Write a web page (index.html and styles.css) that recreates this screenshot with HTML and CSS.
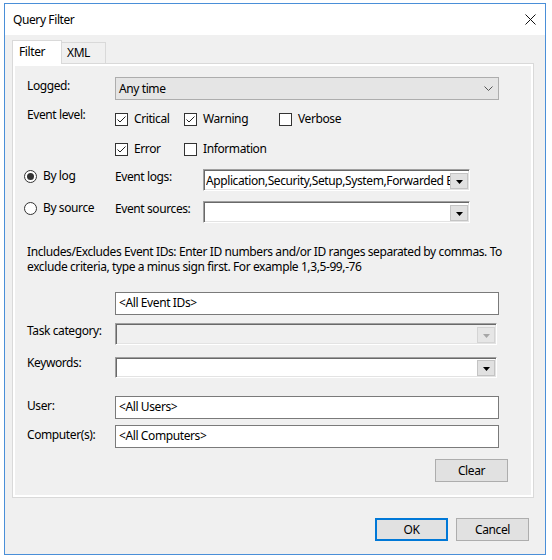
FILE: index.html
```html
<!DOCTYPE html>
<html lang="en">
<head>
    <meta charset="UTF-8">
    <meta name="viewport" content="width=device-width, initial-scale=1.0">
    <title>Query Filter</title>
    <link rel="stylesheet" href="styles.css">
</head>
<body>

<div class="dialog">
    <div class="titlebar">
        <span class="title">Query Filter</span>
        <svg class="close" width="11" height="11" viewBox="0 0 11 11">
            <path d="M0.5 0.5 L10.5 10.5 M10.5 0.5 L0.5 10.5" stroke="#111" stroke-width="1" fill="none"/>
        </svg>
    </div>

    <div class="dialog-body">
        <div class="tabs">
            <div class="tab active">Filter</div>
            <div class="tab">XML</div>
        </div>

        <div class="panel">
            <div class="row row-logged">
                <span class="lbl">Logged:</span>
                <div class="select">
                    <span class="select-text">Any time</span>
                    <svg class="chevron" width="9" height="6" viewBox="0 0 9 6">
                        <polyline points="0.5,0.5 4.5,4.5 8.5,0.5" stroke="#555" stroke-width="1" fill="none"/>
                    </svg>
                </div>
            </div>

            <div class="row row-level1">
                <span class="lbl lbl-level">Event level:</span>
                <div class="checks">
                    <span class="check"><span class="box"><svg width="11" height="11" viewBox="0 0 11 11"><polyline points="1.5,5.5 4,8 9.5,2.5" stroke="#222" stroke-width="1" fill="none"/></svg></span>Critical</span>
                    <span class="check"><span class="box"><svg width="11" height="11" viewBox="0 0 11 11"><polyline points="1.5,5.5 4,8 9.5,2.5" stroke="#222" stroke-width="1" fill="none"/></svg></span>Warning</span>
                    <span class="check"><span class="box"></span>Verbose</span>
                </div>
            </div>

            <div class="row row-level2">
                <span class="lbl"></span>
                <div class="checks">
                    <span class="check"><span class="box"><svg width="11" height="11" viewBox="0 0 11 11"><polyline points="1.5,5.5 4,8 9.5,2.5" stroke="#222" stroke-width="1" fill="none"/></svg></span>Error</span>
                    <span class="check"><span class="box"></span>Information</span>
                </div>
            </div>

            <div class="row row-bylog">
                <span class="radio on"><span class="dot"></span>By log</span>
                <span class="lbl">Event logs:</span>
                <div class="combo combo-short">
                    <span class="combo-text">Application,Security,Setup,System,Forwarded Events</span>
                    <span class="drop">
                        <svg width="7" height="4" viewBox="0 0 7 4"><polygon points="0,0 7,0 3.5,4" fill="#000"/></svg>
                    </span>
                </div>
            </div>

            <div class="row row-bysource">
                <span class="radio"><span class="dot"></span>By source</span>
                <span class="lbl">Event sources:</span>
                <div class="combo combo-short">
                    <span class="combo-text"></span>
                    <span class="drop">
                        <svg width="7" height="4" viewBox="0 0 7 4"><polygon points="0,0 7,0 3.5,4" fill="#000"/></svg>
                    </span>
                </div>
            </div>

            <p class="hint">Includes/Excludes Event IDs: Enter ID numbers and/or ID ranges separated by commas. To<br>exclude criteria, type a minus sign first. For example 1,3,5-99,-76</p>

            <div class="row row-ids">
                <span class="lbl"></span>
                <div class="text-input">&lt;All Event IDs&gt;</div>
            </div>

            <div class="row row-task">
                <span class="lbl">Task category:</span>
                <div class="combo combo-long disabled">
                    <span class="combo-text"></span>
                    <span class="drop">
                        <svg width="7" height="4" viewBox="0 0 7 4"><polygon points="0,0 7,0 3.5,4" fill="#a6a6a6"/></svg>
                    </span>
                </div>
            </div>

            <div class="row row-keywords">
                <span class="lbl lbl-keywords">Keywords:</span>
                <div class="combo combo-long">
                    <span class="combo-text"></span>
                    <span class="drop">
                        <svg width="7" height="4" viewBox="0 0 7 4"><polygon points="0,0 7,0 3.5,4" fill="#000"/></svg>
                    </span>
                </div>
            </div>

            <div class="row row-user">
                <span class="lbl lbl-low">User:</span>
                <div class="text-input">&lt;All Users&gt;</div>
            </div>

            <div class="row row-computer">
                <span class="lbl lbl-low">Computer(s):</span>
                <div class="text-input">&lt;All Computers&gt;</div>
            </div>

            <div class="row row-clear">
                <button class="btn btn-clear">Clear</button>
            </div>
        </div>

        <div class="footer">
            <button class="btn btn-default">OK</button>
            <button class="btn">Cancel</button>
        </div>
    </div>
</div>

</body>
</html>
```

FILE: styles.css
```css
* {
    box-sizing: border-box;
}

body {
    margin: 0;
    width: 552px;
    height: 560px;
    overflow: hidden;
    background: #fff;
    font-family: "Noto Sans", "Liberation Sans", sans-serif;
    font-size: 12px;
    letter-spacing: -0.4px;
    color: #000;
}

/* window frame */
.dialog {
    margin: 3px 0 0 4px;
    width: 542px;
    height: 552px;
    border: 1px solid #4a8fd8;
    background: #f0f0f0;
    display: flex;
    flex-direction: column;
}

.titlebar {
    height: 31px;
    flex: none;
    background: #fff;
    display: flex;
    align-items: center;
    justify-content: space-between;
    padding: 0 9px 0 8px;
}

.title {
    line-height: 16px;
}

.dialog-body {
    flex: 1;
    padding: 5px 11px 0 7px;
}

/* tabs */
.tabs {
    display: flex;
    align-items: flex-end;
    height: 23px;
}

.tab {
    height: 21px;
    line-height: 19px;
    padding-left: 5px;
    width: 44px;
    border: 1px solid #d9d9d9;
    border-left: none;
    border-bottom: none;
    background: #f0f0f0;
}

.tab.active {
    position: relative;
    z-index: 1;
    width: 50px;
    height: 24px;
    margin-bottom: -1px;
    padding-left: 6px;
    line-height: 22px;
    border-left: 1px solid #d9d9d9;
    background: #fff;
}

.panel {
    width: 522px;
    height: 435px;
    border: 1px solid #d9d9d9;
    background: #f0f0f0;
    box-shadow: inset 0 0 0 2px #fff;
    padding: 13px 34px 0 14px;
}

/* rows */
.row {
    display: flex;
    align-items: flex-start;
}

.lbl {
    width: 88px;
    flex: none;
    line-height: 16px;
}

.row-logged .lbl { margin-top: 1px; }
.lbl-level { margin-top: -4px; }
.lbl-keywords { margin-top: -2px; }
.lbl-low { margin-top: 2px; }

.row-level1 { margin-top: 11px; }
.row-level2 { margin-top: 14px; }
.row-bylog { margin-top: 12px; }
.row-bysource { margin-top: 10px; }
.row-ids { margin-top: 18px; }
.row-task { margin-top: 8px; }
.row-keywords { margin-top: 12px; }
.row-user { margin-top: 18px; }
.row-computer { margin-top: 6px; }
.row-clear {
    margin-top: 11px;
    justify-content: flex-end;
    margin-right: -9px;
}

/* flat combo (Logged) */
.select {
    width: 384px;
    height: 23px;
    border: 1px solid #adadad;
    background: #e5e5e5;
    display: flex;
    align-items: center;
    justify-content: space-between;
    padding: 0 5px 0 3px;
}

.chevron {
    margin-top: 1px;
}

/* checkboxes */
.checks {
    display: grid;
    grid-template-columns: 69px 95px auto;
}

.check {
    display: flex;
    align-items: center;
    height: 16px;
    line-height: 16px;
}

.box {
    width: 13px;
    height: 13px;
    border: 1px solid #333;
    background: #fff;
    margin-right: 6px;
    flex: none;
}

.box svg {
    display: block;
}

/* radios */
.radio {
    width: 88px;
    flex: none;
    display: flex;
    align-items: center;
    height: 16px;
    line-height: 16px;
    margin: -1px 0 0 -3px;
}

.radio + .lbl {
    margin-left: 3px;
}

.dot {
    width: 13px;
    height: 13px;
    border: 1px solid #333;
    border-radius: 50%;
    background: #fff;
    margin-right: 6px;
    display: flex;
    align-items: center;
    justify-content: center;
}

.radio.on .dot::after {
    content: "";
    width: 7px;
    height: 7px;
    border-radius: 50%;
    background: #333;
}

/* sunken combos */
.combo {
    height: 22px;
    border: 1px solid;
    border-color: #a0a0a0 #fff #fff #a0a0a0;
    box-shadow: inset 1px 1px 0 #696969, inset -1px -1px 0 #e3e3e3;
    background: #fff;
    display: flex;
    align-items: center;
    padding: 1px 1px 0 2px;
}

.combo-short {
    width: 267px;
}

.combo-long {
    width: 382px;
}

.row-keywords .combo {
    height: 21px;
}

.combo.disabled {
    background: #f0f0f0;
}

.combo-text {
    flex: 1;
    overflow: hidden;
    white-space: nowrap;
    line-height: 16px;
}

.drop {
    width: 18px;
    height: 16px;
    flex: none;
    background: #e1e1e1;
    border: 1px solid #c4c4c4;
    display: flex;
    align-items: center;
    justify-content: center;
}

.drop svg {
    margin-top: 2px;
}

.disabled .drop {
    background: #e6e6e6;
    border-color: #d4d4d4;
}

/* text inputs */
.text-input {
    width: 384px;
    height: 23px;
    border: 1px solid #7a7a7a;
    background: #fff;
    line-height: 20px;
    padding-left: 3px;
}

.hint {
    margin: 21px 0 0;
    line-height: 15px;
    white-space: nowrap;
}

/* buttons */
.btn {
    width: 73px;
    height: 23px;
    border: 1px solid #adadad;
    background: #e1e1e1;
    font-family: inherit;
    font-size: 12px;
    letter-spacing: inherit;
    color: #000;
    padding: 0;
}

.btn-default {
    border: 2px solid #0078d7;
}

.footer {
    display: flex;
    justify-content: flex-end;
    gap: 8px;
    margin: 20px 5px 0 0;
}
```
